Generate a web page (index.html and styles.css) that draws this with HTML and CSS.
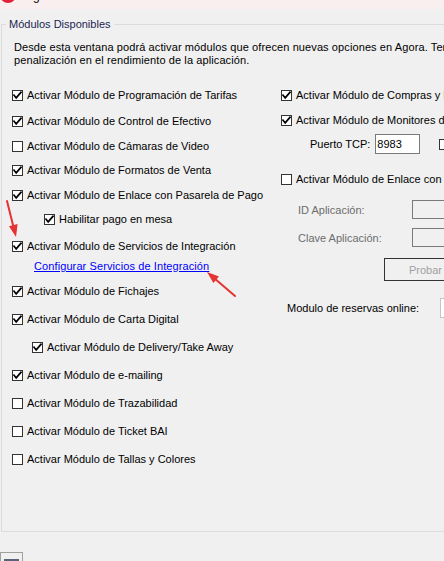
FILE: index.html
```html
<!DOCTYPE html>
<html lang="es">
<head>
<meta charset="utf-8">
<title>Módulos Disponibles</title>
<link rel="stylesheet" href="styles.css">
</head>
<body>
<div class="window">
  <div class="titlebar">
    <span class="appicon"></span>
    <span class="title">Configuración</span>
  </div>

  <section class="group">
    <span class="legend">Módulos Disponibles</span>
    <p class="desc">Desde esta ventana podrá activar módulos que ofrecen nuevas opciones en Agora. Tenga en cuenta que pueden suponer una<br>penalización en el rendimiento de la aplicación.</p>

    <div class="cols">
      <div class="col col-left">
        <label class="row"><svg class="cb" viewBox="0 0 11 11"><rect x=".5" y=".5" width="10" height="10"/><path d="M2 5.2l2.2 2.7L9 2.3"/></svg><span>Activar Módulo de Programación de Tarifas</span></label>
        <label class="row mt12"><svg class="cb" viewBox="0 0 11 11"><rect x=".5" y=".5" width="10" height="10"/><path d="M2 5.2l2.2 2.7L9 2.3"/></svg><span>Activar Módulo de Control de Efectivo</span></label>
        <label class="row mt11"><svg class="cb" viewBox="0 0 11 11"><rect x=".5" y=".5" width="10" height="10"/></svg><span>Activar Módulo de Cámaras de Video</span></label>
        <label class="row mt10"><svg class="cb" viewBox="0 0 11 11"><rect x=".5" y=".5" width="10" height="10"/><path d="M2 5.2l2.2 2.7L9 2.3"/></svg><span>Activar Módulo de Formatos de Venta</span></label>
        <label class="row mt11"><svg class="cb" viewBox="0 0 11 11"><rect x=".5" y=".5" width="10" height="10"/><path d="M2 5.2l2.2 2.7L9 2.3"/></svg><span>Activar Módulo de Enlace con Pasarela de Pago</span></label>
        <label class="row mt10 indent2"><svg class="cb" viewBox="0 0 11 11"><rect x=".5" y=".5" width="10" height="10"/><path d="M2 5.2l2.2 2.7L9 2.3"/></svg><span>Habilitar pago en mesa</span></label>
        <label class="row mt13"><svg class="cb" viewBox="0 0 11 11"><rect x=".5" y=".5" width="10" height="10"/><path d="M2 5.2l2.2 2.7L9 2.3"/></svg><span>Activar Módulo de Servicios de Integración</span></label>
        <div class="row mt6 linkrow"><a class="link" href="#">Configurar Servicios de Integración</a></div>
        <label class="row mt11"><svg class="cb" viewBox="0 0 11 11"><rect x=".5" y=".5" width="10" height="10"/><path d="M2 5.2l2.2 2.7L9 2.3"/></svg><span>Activar Módulo de Fichajes</span></label>
        <label class="row mt14"><svg class="cb" viewBox="0 0 11 11"><rect x=".5" y=".5" width="10" height="10"/><path d="M2 5.2l2.2 2.7L9 2.3"/></svg><span>Activar Módulo de Carta Digital</span></label>
        <label class="row mt14 indent1"><svg class="cb" viewBox="0 0 11 11"><rect x=".5" y=".5" width="10" height="10"/><path d="M2 5.2l2.2 2.7L9 2.3"/></svg><span>Activar Módulo de Delivery/Take Away</span></label>
        <label class="row mt14"><svg class="cb" viewBox="0 0 11 11"><rect x=".5" y=".5" width="10" height="10"/><path d="M2 5.2l2.2 2.7L9 2.3"/></svg><span>Activar Módulo de e-mailing</span></label>
        <label class="row mt14"><svg class="cb" viewBox="0 0 11 11"><rect x=".5" y=".5" width="10" height="10"/></svg><span>Activar Módulo de Trazabilidad</span></label>
        <label class="row mt14"><svg class="cb" viewBox="0 0 11 11"><rect x=".5" y=".5" width="10" height="10"/></svg><span>Activar Módulo de Ticket BAI</span></label>
        <label class="row mt14"><svg class="cb" viewBox="0 0 11 11"><rect x=".5" y=".5" width="10" height="10"/></svg><span>Activar Módulo de Tallas y Colores</span></label>
      </div>

      <div class="col col-right">
        <label class="row"><svg class="cb" viewBox="0 0 11 11"><rect x=".5" y=".5" width="10" height="10"/><path d="M2 5.2l2.2 2.7L9 2.3"/></svg><span>Activar Módulo de Compras y Proveedores</span></label>
        <label class="row mt11"><svg class="cb" viewBox="0 0 11 11"><rect x=".5" y=".5" width="10" height="10"/><path d="M2 5.2l2.2 2.7L9 2.3"/></svg><span>Activar Módulo de Monitores de Cocina</span></label>
        <div class="row row-tcp mt7">
          <span class="tcp-label">Puerto TCP:</span>
          <span class="textbox tcp-box">8983</span>
          <svg class="cb tcp-cb" viewBox="0 0 11 11"><rect x=".5" y=".5" width="10" height="10"/></svg>
        </div>
        <label class="row mt18"><svg class="cb" viewBox="0 0 11 11"><rect x=".5" y=".5" width="10" height="10"/></svg><span>Activar Módulo de Enlace con Pasarela</span></label>
        <div class="row row-field mt14">
          <span class="field-label">ID Aplicación:</span>
          <span class="textbox disabled-box"></span>
        </div>
        <div class="row row-field mt9">
          <span class="field-label">Clave Aplicación:</span>
          <span class="textbox disabled-box"></span>
        </div>
        <div class="row row-btn mt11">
          <span class="button">Probar</span>
        </div>
        <div class="row row-combo mt17">
          <span class="combo-label">Modulo de reservas online:</span>
          <span class="combo"></span>
        </div>
      </div>
    </div>
  </section>

  <div class="taskbtn"><span class="taskbtn-inner"></span></div>

  <svg class="arrows" viewBox="0 0 444 561" width="444" height="561">
    <line x1="7" y1="201" x2="14" y2="229"/>
    <polygon points="16,237 17.6,224 9,226.2"/>
    <line x1="235" y1="296" x2="214" y2="278"/>
    <polygon points="207,272 219,276.5 213.4,283"/>
  </svg>
</div>
</body>
</html>
```

FILE: styles.css
```css
html, body {
  margin: 0;
  padding: 0;
}

body {
  width: 444px;
  height: 561px;
  overflow: hidden;
  background: #f0f0f0;
  font-family: "Liberation Sans", Arial, sans-serif;
  font-size: 11px;
  color: #000;
}

.window {
  position: relative;
  width: 444px;
  height: 561px;
  overflow: hidden;
}

/* ---------- title bar (mostly cropped) ---------- */
.titlebar {
  position: relative;
  height: 9px;
  overflow: hidden;
  background: #f9efef;
}

.appicon {
  position: absolute;
  left: 0;
  top: -13px;
  width: 16px;
  height: 16px;
  border-radius: 50%;
  background: #e2223a;
  z-index: 1;
}

.title {
  display: block;
  margin-top: -10px;
  padding-left: 5px;
  font-size: 12px;
  line-height: 12px;
  white-space: nowrap;
  color: #000;
}

/* ---------- group box ---------- */
.group {
  position: relative;
  box-sizing: border-box;
  width: 640px;
  height: 508px;
  margin: 15px 0 0 1px;
  padding: 16px 0 0 10px;
  border: 1px solid #dcdcdc;
}

.legend {
  position: absolute;
  top: -8px;
  left: 4px;
  padding: 0 3px;
  background: #f0f0f0;
  line-height: 14px;
  color: #1c1f52;
  white-space: nowrap;
}

.desc {
  margin: 0 0 0 2px;
  line-height: 13px;
  letter-spacing: 0.1px;
  white-space: nowrap;
}

.cols {
  display: flex;
  margin-top: 21px;
}

.col {
  display: flex;
  flex-direction: column;
}

.col-left {
  width: 269px;
  flex: none;
}

.col-right {
  flex: 1;
}

.row {
  display: flex;
  align-items: center;
  gap: 4px;
  height: 14px;
  white-space: nowrap;
}

.mt6 { margin-top: 6px; }
.mt7 { margin-top: 7px; }
.mt9 { margin-top: 9px; }
.mt10 { margin-top: 10px; }
.mt11 { margin-top: 11px; }
.mt12 { margin-top: 12px; }
.mt13 { margin-top: 13px; }
.mt14 { margin-top: 14px; }
.mt17 { margin-top: 17px; }
.mt18 { margin-top: 18px; }

.indent1 { padding-left: 20px; }
.indent2 { padding-left: 32px; }
.linkrow { padding-left: 22px; }

/* ---------- checkbox ---------- */
.cb {
  flex: none;
  width: 11px;
  height: 11px;
}

.cb rect {
  fill: #fff;
  stroke: #333;
  stroke-width: 1;
}

.cb path {
  fill: none;
  stroke: #000;
  stroke-width: 1.7;
  stroke-linecap: square;
  stroke-linejoin: miter;
}

.link {
  color: #0000ff;
  text-decoration: underline;
  letter-spacing: 0.1px;
}

/* ---------- right column widgets ---------- */
.row-tcp {
  height: 20px;
  gap: 0;
}

.tcp-label {
  margin-left: 29px;
}

.textbox {
  box-sizing: border-box;
  display: flex;
  align-items: center;
  height: 20px;
  border: 1px solid #7a7a7a;
  background: #fff;
}

.tcp-box {
  width: 45px;
  margin-left: 5px;
  padding-left: 1px;
}

.tcp-cb {
  margin-left: 19px;
}

.row-field {
  height: 19px;
  gap: 0;
}

.field-label {
  width: 114px;
  margin-left: 17px;
  flex: none;
  color: #6d6d6d;
}

.disabled-box {
  width: 60px;
  height: 19px;
  border-color: #7a7a7a;
  background: #f0f0f0;
  flex: none;
}

.row-btn {
  height: 23px;
}

.button {
  box-sizing: border-box;
  display: flex;
  align-items: center;
  justify-content: center;
  width: 83px;
  height: 23px;
  margin-left: 103px;
  border: 1px solid #333;
  background: #f0f0f0;
  color: #a0a0a0;
  flex: none;
}

.row-combo {
  height: 20px;
  gap: 0;
}

.combo-label {
  width: 153px;
  margin-left: 6px;
  flex: none;
}

.combo {
  box-sizing: border-box;
  width: 60px;
  height: 20px;
  border: 1px solid #c4c4c4;
  background: #fff;
  flex: none;
}

/* ---------- bottom ---------- */
.taskbtn {
  box-sizing: border-box;
  width: 23px;
  height: 14px;
  margin-top: 20px;
  padding: 6px 3px 0;
  border: 1px solid #a0a0a0;
}

.taskbtn-inner {
  display: block;
  height: 10px;
  background: #5b6378;
}

/* ---------- red annotation arrows ---------- */
.arrows {
  position: absolute;
  left: 0;
  top: 0;
  pointer-events: none;
}

.arrows line {
  stroke: #e53232;
  stroke-width: 2;
  stroke-linecap: round;
}

.arrows polygon {
  fill: #e53232;
}
```
